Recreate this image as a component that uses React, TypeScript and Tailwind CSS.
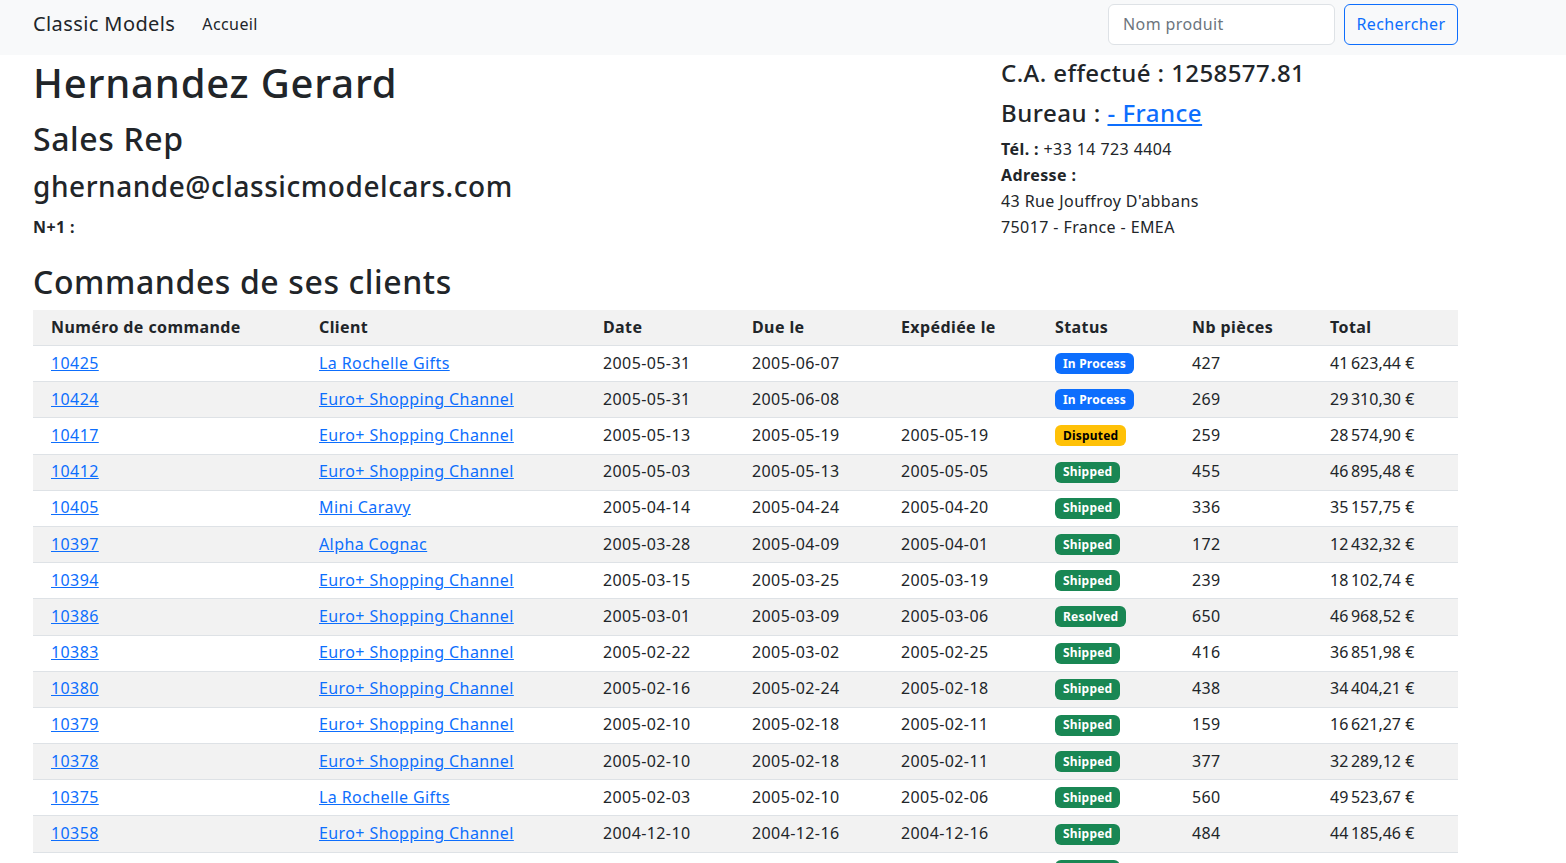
import React from "react";

const S = "\u202f";

const orders = [
  ["10425", "La Rochelle Gifts", "2005-05-31", "2005-06-07", "", "In Process", "427", `41${S}623,44 €`],
  ["10424", "Euro+ Shopping Channel", "2005-05-31", "2005-06-08", "", "In Process", "269", `29${S}310,30 €`],
  ["10417", "Euro+ Shopping Channel", "2005-05-13", "2005-05-19", "2005-05-19", "Disputed", "259", `28${S}574,90 €`],
  ["10412", "Euro+ Shopping Channel", "2005-05-03", "2005-05-13", "2005-05-05", "Shipped", "455", `46${S}895,48 €`],
  ["10405", "Mini Caravy", "2005-04-14", "2005-04-24", "2005-04-20", "Shipped", "336", `35${S}157,75 €`],
  ["10397", "Alpha Cognac", "2005-03-28", "2005-04-09", "2005-04-01", "Shipped", "172", `12${S}432,32 €`],
  ["10394", "Euro+ Shopping Channel", "2005-03-15", "2005-03-25", "2005-03-19", "Shipped", "239", `18${S}102,74 €`],
  ["10386", "Euro+ Shopping Channel", "2005-03-01", "2005-03-09", "2005-03-06", "Resolved", "650", `46${S}968,52 €`],
  ["10383", "Euro+ Shopping Channel", "2005-02-22", "2005-03-02", "2005-02-25", "Shipped", "416", `36${S}851,98 €`],
  ["10380", "Euro+ Shopping Channel", "2005-02-16", "2005-02-24", "2005-02-18", "Shipped", "438", `34${S}404,21 €`],
  ["10379", "Euro+ Shopping Channel", "2005-02-10", "2005-02-18", "2005-02-11", "Shipped", "159", `16${S}621,27 €`],
  ["10378", "Euro+ Shopping Channel", "2005-02-10", "2005-02-18", "2005-02-11", "Shipped", "377", `32${S}289,12 €`],
  ["10375", "La Rochelle Gifts", "2005-02-03", "2005-02-10", "2005-02-06", "Shipped", "560", `49${S}523,67 €`],
  ["10358", "Euro+ Shopping Channel", "2004-12-10", "2004-12-16", "2004-12-16", "Shipped", "484", `44${S}185,46 €`],
  ["10355", "Euro+ Shopping Channel", "2004-12-07", "2004-12-14", "2004-12-13", "Shipped", "283", `25${S}529,78 €`],
];

const cols = "grid grid-cols-[268px_284px_149px_149px_154px_137px_138px_146px]";

const Badge = ({ status }: { status: string }) => {
  let color = "bg-[#198754] text-white";
  if (status === "In Process") color = "bg-[#0d6efd] text-white";
  if (status === "Disputed") color = "bg-[#ffc107] text-black";
  return (
    <span className={`inline-flex items-center h-[21px] px-[8px] rounded-[6px] text-[12px] font-bold tracking-[0.2px] ${color}`}>
      {status}
    </span>
  );
};

const App = () => {
  return (
    <div className="min-h-screen bg-white text-[#212529] font-['Noto_Sans',sans-serif] text-[16px] tracking-[0.4px]">
      <nav className="bg-[#f8f9fa] h-[55px]">
        <div className="w-[1425px] ml-[33px] h-full flex items-center pb-[7px]">
          <span className="text-[20px] tracking-[0.4px]">Classic Models</span>
          <span className="ml-[27px] text-[16px]">Accueil</span>
          <div className="ml-auto flex items-center gap-[9px]">
            <input
              placeholder="Nom produit"
              className="w-[227px] h-[41px] px-[14px] bg-white border border-[#dee2e6] rounded-[6px] text-[16px] placeholder:text-[#6c757d] outline-none"
            />
            <button className="w-[114px] h-[41px] border border-[#0d6efd] text-[#0d6efd] rounded-[6px] text-[16px]">
              Rechercher
            </button>
          </div>
        </div>
      </nav>

      <main className="w-[1425px] ml-[33px]">
        <div className="grid grid-cols-[968px_1fr]">
          <div>
            <h1 className="mt-[4px] text-[40px] leading-[48px] font-medium tracking-[0.8px]">Hernandez Gerard</h1>
            <h2 className="mt-[13px] text-[32px] leading-[38px] font-medium tracking-[0.6px]">Sales Rep</h2>
            <h3 className="mt-[11px] text-[28px] leading-[34px] font-medium tracking-[0.55px]">ghernande@classicmodelcars.com</h3>
            <p className="mt-[12px] leading-[24px] font-bold">N+1 :</p>
          </div>
          <div>
            <h4 className="mt-[3px] text-[24px] leading-[29px] font-medium tracking-[0.4px]">C.A. effectué : 1258577.81</h4>
            <h4 className="mt-[11px] text-[24px] leading-[29px] font-medium tracking-[0.5px]">
              Bureau : <a href="#" className="text-[#0d6efd] underline">- France</a>
            </h4>
            <div className="mt-[9px]">
              <div className="leading-[26px]"><b>Tél. :</b> +33 14 723 4404</div>
              <div className="leading-[26px] font-bold">Adresse :</div>
              <div className="leading-[26px]">43 Rue Jouffroy D'abbans</div>
              <div className="leading-[26px]">75017 - France - EMEA</div>
            </div>
          </div>
        </div>

        <h2 className="mt-[23px] text-[32px] leading-[38px] font-medium tracking-[0.6px]">Commandes de ses clients</h2>

        <div className="mt-[9px]">
          <div className={`${cols} h-[36px] items-center bg-[#f2f2f2] border-b border-[#dee2e6] font-bold pb-[2px]`}>
            {["Numéro de commande", "Client", "Date", "Due le", "Expédiée le", "Status", "Nb pièces", "Total"].map((h) => (
              <div key={h} className="pl-[18px]">{h}</div>
            ))}
          </div>
          {orders.map((o, i) => (
            <div
              key={o[0]}
              className={`${cols} h-[36.2px] items-center border-b border-[#dee2e6] pb-[2px] ${i % 2 === 1 ? "bg-[#f2f2f2]" : "bg-white"}`}
            >
              <div className="pl-[18px]"><a href="#" className="text-[#0d6efd] underline">{o[0]}</a></div>
              <div className="pl-[18px]"><a href="#" className="text-[#0d6efd] underline">{o[1]}</a></div>
              <div className="pl-[18px]">{o[2]}</div>
              <div className="pl-[18px]">{o[3]}</div>
              <div className="pl-[18px]">{o[4]}</div>
              <div className="pl-[18px] flex pt-[2px]"><Badge status={o[5]} /></div>
              <div className="pl-[18px]">{o[6]}</div>
              <div className="pl-[18px]">{o[7]}</div>
            </div>
          ))}
        </div>
      </main>
    </div>
  );
};

export default App;
